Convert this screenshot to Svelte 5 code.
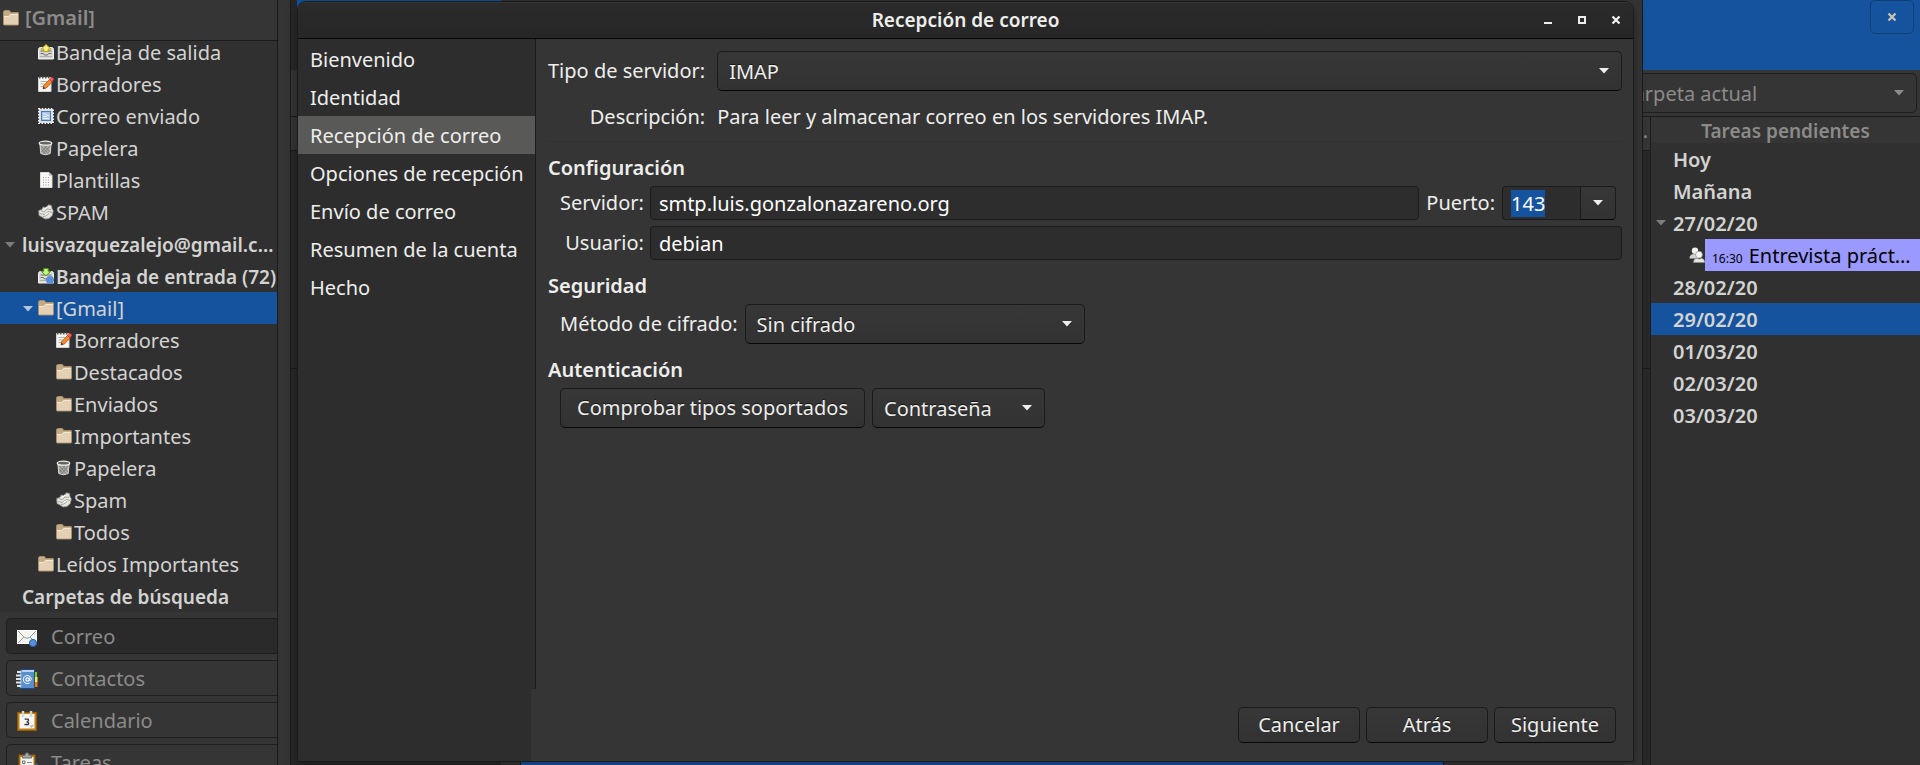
<script>
  import { onMount } from 'svelte';

  const folders = [
    { name: 'Bandeja de salida', icon: 'outbox', level: 1 },
    { name: 'Borradores', icon: 'drafts', level: 1 },
    { name: 'Correo enviado', icon: 'sent', level: 1 },
    { name: 'Papelera', icon: 'trash', level: 1 },
    { name: 'Plantillas', icon: 'template', level: 1 },
    { name: 'SPAM', icon: 'junk', level: 1 },
    { name: 'luisvazquezalejo@gmail.c…', level: 0, bold: true, open: true },
    { name: 'Bandeja de entrada (72)', icon: 'inbox', level: 1, bold: true },
    { name: '[Gmail]', icon: 'folder', level: 1, open: true, selected: true },
    { name: 'Borradores', icon: 'drafts', level: 2 },
    { name: 'Destacados', icon: 'folder', level: 2 },
    { name: 'Enviados', icon: 'folder', level: 2 },
    { name: 'Importantes', icon: 'folder', level: 2 },
    { name: 'Papelera', icon: 'trash', level: 2 },
    { name: 'Spam', icon: 'junk', level: 2 },
    { name: 'Todos', icon: 'folder', level: 2 },
    { name: 'Leídos Importantes', icon: 'folder', level: 1 },
    { name: 'Carpetas de búsqueda', level: 0, bold: true }
  ];
  const views = [
    { name: 'Correo', icon: 'mail' },
    { name: 'Contactos', icon: 'contacts' },
    { name: 'Calendario', icon: 'calendar' },
    { name: 'Tareas', icon: 'tasks' }
  ];
  const steps = ['Bienvenido', 'Identidad', 'Recepción de correo', 'Opciones de recepción', 'Envío de correo', 'Resumen de la cuenta', 'Hecho'];
  const current = 'Recepción de correo';
  const daysBefore = ['Hoy', 'Mañana'];
  const daysAfter = ['28/02/20', '29/02/20', '01/03/20', '02/03/20', '03/03/20'];
  const today = '29/02/20';

  let port;
  onMount(() => {
    port.focus();
    port.select();
  });
</script>

{#snippet arrow()}
  <svg class="arrow" viewBox="0 0 10 6" width="10" height="6" aria-hidden="true"><path d="M0 0h10L5 5.6z" fill="currentColor" /></svg>
{/snippet}

{#snippet close()}
  <svg viewBox="0 0 10 10" width="10" height="10" aria-hidden="true"><path d="M1.5 1.5l7 7M8.500 1.500l-7 7" stroke="currentColor" stroke-width="2.300" /></svg>
{/snippet}

{#snippet small(kind)}
  <svg class="icon" viewBox="0 0 16 16" width="16" height="16" aria-hidden="true">
    {#if kind === 'folder'}
      <path d="M.5 2.500q0-2 1.500-2h4q1 0 1.500 2h7.500q.5 0 .5 1V14q0 1-1 1H1.500q-1 0-1-1z" fill="#c3ab86" stroke="#a8906a" />
      <path d="M1 6h4.500l2-2H15v10q0 .5-.5.5h-13q-.5 0-.5-.5z" fill="#e4d0b4" />
      <path d="M1 6.500h4.700l2-2H15" fill="none" stroke="#f3e8d6" />
    {:else if kind === 'outbox' || kind === 'inbox'}
      <path d="M.5 5.500q0-2 2-2h11q2 0 2 2V15H.5z" fill="#d9d9d6" stroke="#f4f4f2" />
      <path d="M2.500 7h11M2.500 9.500h3l1 1.500h3l1-1.500h3" fill="none" stroke="#6f716c" />
      <path d="M2 12.500h12" stroke="#aeb0ab" />
      {#if kind === 'outbox'}
        <path d="M8 .5l4.800 4.500h-2.600v2.500H5.800V5H3.200z" fill="#fdf08a" stroke="#c4a000" />
      {:else}
        <path d="M5.800.5h4.400v2.800h2.600L8 7.700 3.200 3.300h2.600z" fill="#c4f48c" stroke="#4e9a06" />
        <circle cx="12" cy="12" r="4" fill="#5b8ed8" />
      {/if}
    {:else if kind === 'drafts'}
      <path d="M.5 1.500h12.500v14H.5z" fill="#f6f6f4" stroke="#d2d2cf" />
      <path d="M1 1.500h12" stroke="#555753" stroke-dasharray="1.500 1.500" stroke-width="2" />
      <path d="M2.500 5.500h7M2.500 8h5M2.500 10.500h3" stroke="#b0b2ad" />
      <path d="M5 13l.7-3.500 5.800-6 2.700 2.500-5.800 6z" fill="#f28a30" stroke="#a94d08" stroke-width=".7" />
      <path d="M11.500 3.500l1.800-2.300q2.200-.2 2.500 2L14.200 6z" fill="#ef5f5f" stroke="#c12222" stroke-width=".6" />
      <path d="M5 13l.5-2.500 1.800 1.800z" fill="#3b3b3b" />
    {:else if kind === 'sent'}
      <rect x="1" y="1" width="14" height="14" fill="#dcdfdc" />
      <rect x=".8" y=".8" width="14.400" height="14.400" fill="none" stroke="#f6f6f4" stroke-width="1.600" stroke-dasharray="1.500 1.500" />
      <rect x="3.500" y="3.500" width="9" height="9" fill="#a5c5ea" stroke="#4579b8" />
      <path d="M5 6h3l1 1.500h2.500M5 8.500h4M5 10.500h6" stroke="#eaf3ff" fill="none" />
    {:else if kind === 'trash'}
      <path d="M1.800 3l1 10.500q4.700 2.500 9.400 0l1-10.500z" fill="#a9aba6" stroke="#d9d9d6" />
      <path d="M3.500 6l7 8M6.500 6l5.500 6M3.300 9l4 5M12 6l-7 8M9 6l-5.500 6" stroke="#6f716c" stroke-width=".7" />
      <ellipse cx="7.500" cy="3.200" rx="6.300" ry="2" fill="#62645f" stroke="#eeeeec" stroke-width="1.200" />
    {:else if kind === 'template'}
      <path d="M2.500.5h8.500l3 3v12H2.500z" fill="#f6f6f4" stroke="#dcdcd9" />
      <path d="M11 .5v3h3z" fill="#bcbeb9" />
      <path d="M5 5.500h7M5 8h7M5 10.500h7M5 13h7" stroke="#9fa19c" stroke-dasharray="1 1.500" />
    {:else if kind === 'junk'}
      <path d="M.7 6.500l3-1 1.500-2.500L8 3.500 10.500.8l3 .7.5 3 1.300 2.500-1 4.500-3.300 3-4 .5-3-2-3-1.500z" fill="#e6e6e1" stroke="#8a8c86" stroke-width=".8" />
      <path d="M3 6.500l3 1.500 3-3 4 .5M2 9.500l4 1 4.500-3 3.500 1M5 12.500l3-.5 3-2.500" fill="none" stroke="#96988f" stroke-width=".8" />
      <path d="M6 5.500l3-2.500M7 10.500l3-1.500" stroke="#fff" />
    {:else}
      <circle cx="6" cy="3.700" r="3.200" fill="#f1f1ee" />
      <path d="M.5 11.500q0-4.500 4.500-4.500t5 4.500z" fill="#d3d3cf" />
      <circle cx="10" cy="7.700" r="3.400" fill="#f7f7f5" stroke="#8a8c86" stroke-width=".7" />
      <path d="M4.500 15.500q0-3.700 3.500-4.200l2 1 2.500-1q3 .5 3.300 4.200z" fill="#e6e6e2" stroke="#8a8c86" stroke-width=".5" />
    {/if}
  </svg>
{/snippet}

{#snippet large(kind)}
  <svg class="icon" viewBox="0 0 22 22" width="22" height="22" aria-hidden="true">
    {#if kind === 'mail'}
      <rect x="1.500" y="4.500" width="19" height="13" fill="#f3f3f1" stroke="#fff" />
      <path d="M2 5l6.500 6.500q2.500 1.500 5 0L20 5M2 17l6-6M20 17l-6-6" fill="none" stroke="#9a9c97" />
      <circle cx="17" cy="17" r="3.600" fill="#5b8ed8" stroke="#2f61ab" />
    {:else if kind === 'contacts'}
      <path d="M18 4h3v5h-3z" fill="#73d216" /><path d="M18 9h3.500v5H18z" fill="#fce94f" /><path d="M18 14h3.500v5H18z" fill="#f57900" />
      <path d="M5.500 1.500h13v19h-15v-18z" fill="#5a8fce" stroke="#204a87" />
      <path d="M6 3h12" stroke="#fff" stroke-width="1.200" />
      <path d="M1 4h4M0 7.500h5M0 11h5M0 14.500h5M1 18h4" stroke="#e1e1de" stroke-width="2" />
      <path d="M5.500 3v17" stroke="#729fcf" />
      <circle cx="11.500" cy="11.500" r="1.700" fill="none" stroke="#fff" stroke-width="1.200" />
      <path d="M13.300 9.500v2.700q1.500 1.300 2-.7a4 4 0 1 0-1.800 3.400" fill="none" stroke="#fff" />
    {:else if kind === 'calendar'}
      <rect x="1.500" y="2.500" width="19" height="18" fill="#c17d11" stroke="#8f5902" />
      <rect x="3.500" y="4" width="15" height="14.500" fill="#f6f6f4" />
      <path d="M14.500 18.500v-3.500h4z" fill="#babdb6" />
      <path d="M7 1v6M15 1v6" stroke="#d3d7cf" stroke-width="2.400" />
      <path d="M8.700 9.200h3.500q1 1.800-1.500 2.600 3 .5 1.600 2.700h-3.800" fill="none" stroke="#2e3436" stroke-width="1.300" />
    {:else}
      <rect x="3" y="3" width="16" height="19" fill="#c17d11" stroke="#8f5902" />
      <rect x="4.500" y="5" width="13" height="17" fill="#f3f3f1" />
      <path d="M6.500 6V3.500h2.500Q9 .8 11 .8t2 2.700h2.500V6z" fill="#a5a7a2" stroke="#6b6d69" />
      <path d="M6.500 9h2.500v2.500H6.500zM6.500 14h2.500v2.500H6.500zM6.500 19h2.500v2.500H6.500z" fill="#fff" stroke="#6b6d69" />
      <path d="M11 10.500h5M11 15.500h4M11 20h3" stroke="#888a85" />
      <path d="M14 21l6-10 2 1-5 10z" fill="#3465a4" />
    {/if}
  </svg>
{/snippet}

<div class="desktop">
  <aside class="sidebar">
    <h2 class="current">{@render small('folder')}<span>[Gmail]</span></h2>
    <ul class="tree">
      {#each folders as f}
        <li class="level{f.level}" class:bold={f.bold} class:selected={f.selected}>
          <span class="expander">{#if f.open}{@render arrow()}{/if}</span>
          {#if f.icon}{@render small(f.icon)}{/if}
          <span>{f.name}</span>
        </li>
      {/each}
    </ul>
    <nav class="views">
      {#each views as v, i}
        <button class:active={i === 0}>{@render large(v.icon)}<span>{v.name}</span></button>
      {/each}
    </nav>
  </aside>

  <main class="mail">
    <header class="banner">
      <button class="dismiss" aria-label="Cerrar">{@render close()}</button>
    </header>
    <div class="search">
      <div class="combo scope">
        <select aria-label="Ámbito"><option>Carpeta actual</option></select>{@render arrow()}
      </div>
    </div>
    <div class="columns">
      <div class="messages"><div class="heads">…</div><div class="list"></div></div>
      <section class="todo">
        <h2>Tareas pendientes</h2>
        <ul>
          {#each daysBefore as d}<li>{d}</li>{/each}
          <li><span class="expander">{@render arrow()}</span>27/02/20</li>
          <li class="event">{@render small('people')}<div><small>16:30</small><span>Entrevista práct…</span></div></li>
          {#each daysAfter as d}<li class:selected={d === today}>{d}</li>{/each}
        </ul>
      </section>
    </div>
    <div class="backwindow"><div></div></div>
  </main>

  <form class="dialog" onsubmit={(e) => e.preventDefault()}>
    <header class="titlebar">
      <h1>Recepción de correo</h1>
      <div class="controls">
        <button type="button" aria-label="Minimizar"><svg viewBox="0 0 10 10" width="10" height="10"><path d="M1 8h8" stroke="currentColor" stroke-width="2" /></svg></button>
        <button type="button" aria-label="Maximizar"><svg viewBox="0 0 10 10" width="10" height="10"><path d="M2 2h6v6H2z" fill="none" stroke="currentColor" stroke-width="2" /></svg></button>
        <button type="button" aria-label="Cerrar">{@render close()}</button>
      </div>
    </header>
    <div class="body">
      <ol class="steps">
        {#each steps as s}<li class:current={s === current}>{s}</li>{/each}
      </ol>
      <div class="page">
        <div class="type">
          <label for="type">Tipo de servidor:</label>
          <div class="combo"><select id="type"><option>IMAP</option></select>{@render arrow()}</div>
          <span class="key">Descripción:</span>
          <span>Para leer y almacenar correo en los servidores IMAP.</span>
        </div>
        <hr />
        <h2>Configuración</h2>
        <div class="account">
          <label for="host">Servidor:</label>
          <div class="host">
            <input id="host" type="text" value="smtp.luis.gonzalonazareno.org" />
            <label for="port">Puerto:</label>
            <div class="port">
              <input id="port" type="text" value="143" bind:this={port} />
              <button type="button" aria-label="Puertos">{@render arrow()}</button>
            </div>
          </div>
          <label for="user">Usuario:</label>
          <input id="user" type="text" value="debian" />
        </div>
        <h2>Seguridad</h2>
        <div class="line">
          <label for="crypt">Método de cifrado:</label>
          <div class="combo crypt"><select id="crypt"><option>Sin cifrado</option></select>{@render arrow()}</div>
        </div>
        <h2>Autenticación</h2>
        <div class="line">
          <button type="button" class="raised check">Comprobar tipos soportados</button>
          <div class="combo auth"><select aria-label="Tipo de autenticación"><option>Contraseña</option></select>{@render arrow()}</div>
        </div>
      </div>
    </div>
    <footer class="actions">
      <div>
        <button type="button" class="raised">Cancelar</button>
        <button type="button" class="raised">Atrás</button>
        <button type="submit" class="raised">Siguiente</button>
      </div>
    </footer>
  </form>
</div>

<style>
  :global(body) { background: #303030; }
  .desktop, .desktop * { box-sizing: border-box; }
  .desktop {
    position: relative; display: grid; grid-template-columns: 278px 12px 1fr;
    height: 100vh; overflow: hidden; background: #343434; color: #d3d3d2;
    font: 20px/28px 'Noto Sans', 'Open Sans', sans-serif;
  }
  h1, h2 { margin: 0; font-size: 19px; line-height: 28px; font-weight: 600; }
  ul, ol { margin: 0; padding: 0; list-style: none; }
  button, input, select { font: inherit; color: inherit; margin: 0; }
  svg { display: block; flex: none; }

  .sidebar { display: flex; flex-direction: column; min-height: 0; overflow: hidden; background: #353535; border-right: 1px solid #1b1b1b; }
  .sidebar .current { display: flex; align-items: center; flex: none; gap: 6px; height: 41px; padding: 0 3px 4px; border-bottom: 1px solid #1b1b1b; color: #8b8b89; font-size: 20px; }
  .tree { flex: none; height: 571px; display: flex; flex-direction: column; justify-content: flex-end; overflow: hidden; background: #303030; }
  .tree li { flex: none; display: flex; align-items: center; height: 32px; padding-top: 2px; gap: 2px; white-space: nowrap; }
  .tree .icon { margin-bottom: 2px; }
  .expander { flex: none; display: flex; justify-content: flex-end; color: #7c7c7b; }
  .tree .expander { width: 15px; }
  .tree .level0 { gap: 7px; }
  .tree .level1 .expander { width: 36px; padding-right: 3px; }
  .tree .level2 .expander { width: 54px; }
  .bold { font-size: 19px; font-weight: 600; }
  .selected { background: #15539e; }
  .selected .expander { color: #b4c6de; }
  .views { display: flex; flex-direction: column; gap: 6px; padding: 6px 0 0 6px; }
  .views button {
    flex: none; display: flex; align-items: center; gap: 13px; height: 36px; padding: 1px 9px 0;
    border: 1px solid #1f1f1f; border-right: 0; border-radius: 5px 0 0 5px; background: #353535; color: #8b8b89;
  }
  .views .active { background: #2a2a2a; }

  .mail { grid-column: 3; position: relative; display: flex; flex-direction: column; min-width: 0; background: #282828; border-left: 1px solid #1b1b1b; }
  .banner { display: flex; justify-content: flex-end; flex: none; height: 70px; margin-left: 6px; padding-right: 6px; background: #15539e; }
  .dismiss { display: grid; place-items: center; width: 44px; height: 34px; padding: 0; border: 1px solid #103f78; border-radius: 5px; background: #15539e; color: #c9c4b8; }
  .search { flex: none; display: flex; justify-content: flex-end; padding: 3px 3px 3px 0; background: #353535; border-bottom: 1px solid #1b1b1b; }
  .columns { flex: 1; display: flex; min-height: 0; }
  .messages { flex: 1; display: flex; flex-direction: column; }
  .heads { height: 34px; padding-right: 2px; background: #353535; border-bottom: 1px solid #1b1b1b; color: #8b8b89; text-align: right; }
  .list { height: 218px; border-bottom: 1px solid #1b1b1b; }
  .todo { width: 270px; background: #303030; border-left: 1px solid #1b1b1b; }
  .todo h2 { height: 26px; line-height: 28px; background: #353535; color: #8b8b89; text-align: center; }
  .todo li { position: relative; height: 32px; padding-left: 22px; line-height: 33px; font-weight: 600; white-space: nowrap; }
  .todo .expander { position: absolute; left: 5px; top: 13px; }
  .todo .event { display: flex; align-items: center; padding-left: 38px; font-weight: 400; }
  .event div { flex: 1; min-width: 0; height: 32px; overflow: hidden; padding-left: 7px; background: #9a99ff; color: #000; }
  .event small { margin-right: 6px; font-size: 12px; }
  .backwindow { position: absolute; inset: 0 277px 0 210px; display: flex; align-items: flex-end; padding: 0 198px 0 19px; background: #353535; border-right: 1px solid #1b1b1b; }
  .backwindow div { flex: 1; height: 6px; background: #15539e; border: solid #1b1b1b; border-width: 0 1px; }

  .combo { display: grid; align-items: center; color: #eeeeec; }
  .combo select {
    grid-area: 1 / 1; width: 100%; height: 40px; padding: 1px 11px 0; appearance: none; outline: 0;
    border: 1px solid #1b1b1b; border-bottom-color: #070707; border-radius: 5px; background: linear-gradient(#373737, #323232);
    text-shadow: 0 -1px rgba(0, 0, 0, .6);
  }
  .combo .arrow { grid-area: 1 / 1; justify-self: end; margin-right: 13px; pointer-events: none; }
  .scope { width: 308px; color: #8b8b89; }
  .scope select { border-color: #1f1f1f; background: #353535; text-shadow: none; }

  .dialog {
    position: absolute; inset: 1px 286px 3px 297px; display: flex; flex-direction: column; overflow: hidden;
    background: #353535; border: 1px solid #1b1b1b; border-radius: 9px 9px 0 0; color: #eeeeec;
    box-shadow: 0 2px 12px rgba(0, 0, 0, .35);
  }
  .titlebar { flex: none; display: grid; align-items: center; height: 37px; background: linear-gradient(#2b2b2b, #262626); border-bottom: 1px solid #070707; box-shadow: inset 0 1px #353535; }
  .titlebar h1 { grid-area: 1 / 1; text-align: center; }
  .controls { grid-area: 1 / 1; justify-self: end; display: flex; gap: 14px; padding-right: 7px; }
  .controls button { display: grid; place-items: center; width: 20px; height: 20px; padding: 0; border: 0; background: none; }
  .body { flex: 1; display: flex; min-height: 0; }
  .steps { flex: none; width: 238px; padding-top: 1px; background: #2d2d2d; border-right: 1px solid #1b1b1b; white-space: nowrap; }
  .steps li { height: 38px; padding: 0 12px; line-height: 39px; }
  .steps .current { background: #595957; }
  .page { flex: 1; min-width: 0; padding: 12px 11px 0 12px; }
  .page h2 { margin: 12px 0 4px; font-size: 20px; }
  .type { display: grid; grid-template-columns: auto 1fr; align-items: center; gap: 12px; }
  .key { text-align: right; }
  hr { height: 1px; margin: 10px 0 0; border: 0; background: #303030; }
  .account { display: grid; grid-template-columns: auto 1fr; align-items: center; gap: 6px; padding-left: 12px; text-align: right; }
  .host { display: flex; align-items: center; gap: 7px; padding-right: 6px; }
  input { width: 100%; min-width: 0; height: 34px; padding: 1px 8px 0; outline: 0; border: 1px solid #1b1b1b; border-radius: 4px; background: #2d2d2d; color: #fff; }
  input::selection { background: #15539e; color: #fff; }
  .port { flex: none; display: flex; width: 114px; }
  .port input { border-radius: 4px 0 0 4px; border-right: 0; }
  .port button { flex: none; display: grid; place-items: center; width: 36px; padding: 0; border: 1px solid #1b1b1b; border-bottom-color: #070707; border-radius: 0 4px 4px 0; background: linear-gradient(#373737, #323232); }
  .line { display: flex; align-items: center; gap: 7px; padding-left: 12px; }
  .crypt { width: 340px; }
  .auth { width: 173px; }
  .raised { height: 36px; padding: 0 16px; border: 1px solid #1b1b1b; border-bottom-color: #070707; border-radius: 5px; background: linear-gradient(#373737, #323232); text-shadow: 0 -1px rgba(0, 0, 0, .6); white-space: nowrap; }
  .check { height: 40px; }
  .actions { flex: none; display: flex; padding-left: 233px; background: #2d2d2d; }
  .actions div { flex: 1; display: flex; justify-content: flex-end; gap: 6px; padding: 18px 17px 18px 0; background: #353535; }
  .actions .raised { width: 122px; padding: 0; }
</style>
